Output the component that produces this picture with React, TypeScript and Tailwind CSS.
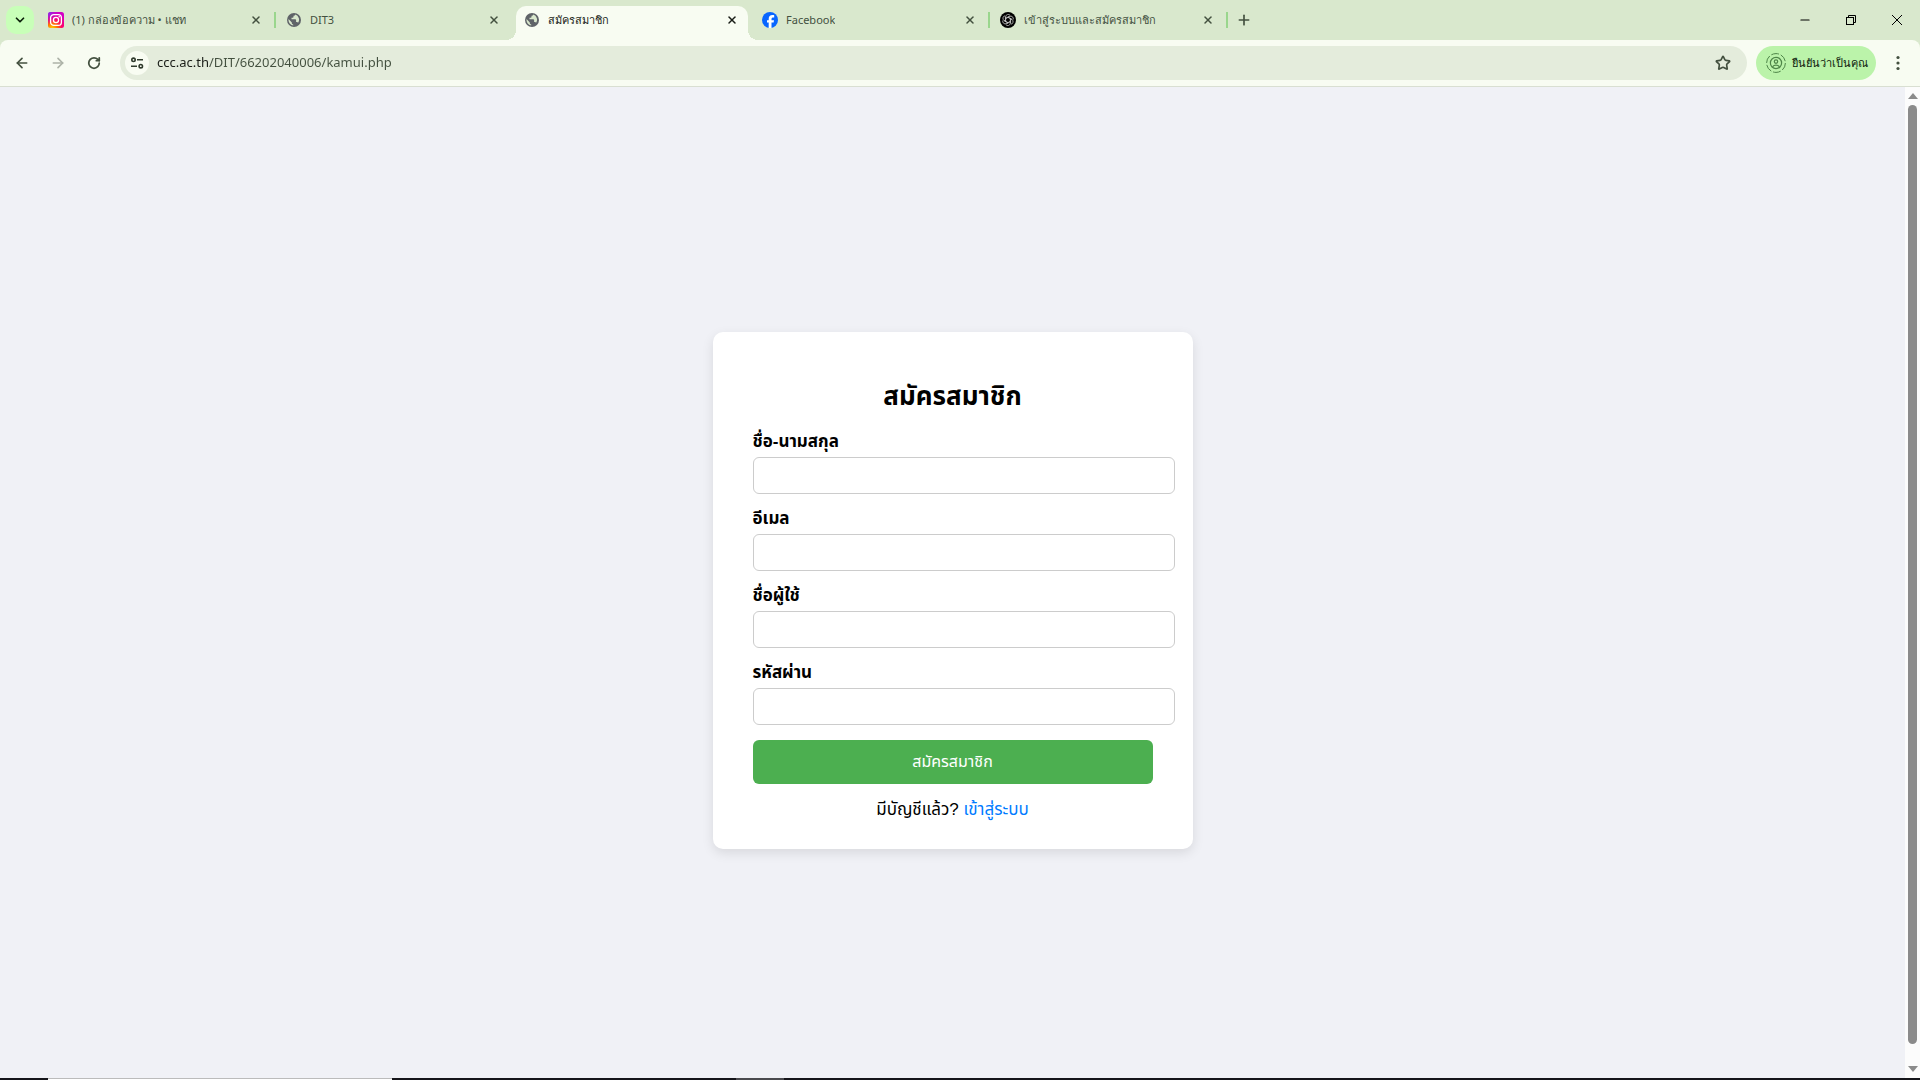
import type { ReactNode } from "react";
import {
  ArrowLeft,
  ArrowRight,
  ChevronDown,
  Minus,
  Plus,
  RotateCw,
  Star,
  X,
} from "lucide-react";
import clsx from "clsx";

function InstagramIcon() {
  return (
    <svg viewBox="0 0 16 16" className="size-4 shrink-0" aria-hidden="true">
      <defs>
        <radialGradient id="ig-warm" cx="0.25" cy="1.05" r="1.05">
          <stop offset="0" stopColor="#ffd600" />
          <stop offset="0.3" stopColor="#ff7a00" />
          <stop offset="0.6" stopColor="#ff0169" />
          <stop offset="1" stopColor="#d300c5" />
        </radialGradient>
        <radialGradient id="ig-cool" cx="0" cy="0" r="0.8">
          <stop offset="0" stopColor="#7638fa" />
          <stop offset="1" stopColor="#d300c5" stopOpacity="0" />
        </radialGradient>
      </defs>
      <rect width="16" height="16" rx="2.5" fill="url(#ig-warm)" />
      <rect width="16" height="16" rx="2.5" fill="url(#ig-cool)" />
      <g fill="none" stroke="#fff" strokeWidth="1.3">
        <rect x="2.6" y="2.6" width="10.8" height="10.8" rx="3.2" />
        <circle cx="8" cy="8" r="2.6" />
      </g>
      <circle cx="11.2" cy="4.8" r="0.8" fill="#fff" />
    </svg>
  );
}

function GlobeIcon() {
  return (
    <svg viewBox="0 0 16 16" className="size-4 shrink-0" aria-hidden="true">
      <circle cx="8" cy="8" r="7" fill="#5f6368" />
      <path
        d="M9.3 2.4c-.2.8-.9 1.300-1.800 1.300v1.200c0 .5-.4.8-.9.8H5.500v1.500h3.700c.5 0 .9.4.9.9v1.800h.7c.6 0 1.100.4 1.300.9a5.600 5.600 0 0 0-2.800-8.400z"
        fill="#d9e8cd"
      />
      <path
        d="M2.500 7.100l3.300 3.300v.7c0 .8.600 1.400 1.400 1.400v1.100a5.700 5.700 0 0 1-4.700-6.500z"
        fill="#d9e8cd"
      />
    </svg>
  );
}

function FacebookIcon() {
  return (
    <svg viewBox="0 0 16 16" className="size-4 shrink-0" aria-hidden="true">
      <circle cx="8" cy="8" r="8" fill="#0866ff" />
      <path
        d="M6.700 15.900v-5.300H5V8.200h1.700V7.100c0-2.700 1.200-4 3.900-4 .5 0 1.200.1 1.600.2v2.200h-.9c-1.300 0-1.800.5-1.800 1.800v.9h2.500l-.4 2.400H9.500v5.300z"
        fill="#fff"
      />
    </svg>
  );
}

function ChatIcon() {
  return (
    <svg viewBox="0 0 16 16" className="size-4 shrink-0" aria-hidden="true">
      <circle cx="8" cy="8" r="8" fill="#000" />
      <g fill="none" stroke="#cfcfcf" strokeWidth="0.7">
        {[0, 60, 120, 180, 240, 300].map((angle) => (
          <path
            key={angle}
            d="M5.700 9.400V4.900a2.500 2.500 0 0 1 4.500-1.500M5.700 6.300l3.900-2.200"
            transform={`rotate(${angle} 8 8)`}
          />
        ))}
      </g>
    </svg>
  );
}

function TuneIcon() {
  return (
    <svg viewBox="0 0 16 16" className="size-4" fill="none" stroke="#2f3a2c" strokeWidth="1.6" aria-hidden="true">
      <circle cx="4.500" cy="4.800" r="1.700" />
      <path d="M8 4.800h6M2 11.200h6" />
      <circle cx="11.800" cy="11.200" r="1.700" />
    </svg>
  );
}

function ProfileIcon() {
  return (
    <svg viewBox="0 0 20 20" className="size-5 shrink-0" fill="none" stroke="#4e8548" aria-hidden="true">
      <circle cx="10" cy="10" r="9.400" strokeWidth="1" strokeDasharray="7.800 2" />
      <circle cx="10" cy="10" r="5.600" strokeWidth="1.200" />
      <circle cx="10" cy="8.600" r="1.700" strokeWidth="1.200" />
      <path d="M6.500 13.800c1.700-2.200 5.300-2.200 7 0" strokeWidth="1.200" />
    </svg>
  );
}

interface TabInfo {
  title: string;
  icon: ReactNode;
  active?: boolean;
  separator?: boolean;
}

const TABS: TabInfo[] = [
  { title: "(1) กล่องข้อความ • แชท", icon: <InstagramIcon />, separator: true },
  { title: "DIT3", icon: <GlobeIcon /> },
  { title: "สมัครสมาชิก", icon: <GlobeIcon />, active: true },
  { title: "Facebook", icon: <FacebookIcon />, separator: true },
  { title: "เข้าสู่ระบบและสมัครสมาชิก", icon: <ChatIcon />, separator: true },
];

const FIELDS = [
  { id: "fullname", label: "ชื่อ-นามสกุล", type: "text" },
  { id: "email", label: "อีเมล", type: "email" },
  { id: "username", label: "ชื่อผู้ใช้", type: "text" },
  { id: "password", label: "รหัสผ่าน", type: "password" },
];

function Tab({ title, icon, active, separator }: TabInfo) {
  return (
    <div className="relative flex w-[238px] min-w-0 items-end">
      {active && (
        <>
          {/* Curved feet where the active tab meets the toolbar */}
          <span className="absolute bottom-0 -left-2 size-2.5 bg-[radial-gradient(circle_at_top_left,transparent_10px,#f8fcf2_10px)]" />
          <span className="absolute bottom-0 -right-1.5 size-2.5 bg-[radial-gradient(circle_at_top_right,transparent_10px,#f8fcf2_10px)]" />
        </>
      )}
      <div
        className={clsx(
          "ml-0.5 mr-1 flex h-[34px] min-w-0 flex-1 items-center rounded-t-[10px] pb-1.5 pl-2 pr-1.5",
          active ? "bg-[#f8fcf2] text-[#191d17]" : "text-[#43503f]"
        )}
      >
        <button className="flex min-w-0 flex-1 items-center gap-2 text-left text-[11px]">
          {icon}
          <span className="truncate leading-5">{title}</span>
        </button>
        <button className="flex size-5 items-center justify-center" aria-label="Close tab">
          <X className="size-3" strokeWidth={3} />
        </button>
      </div>
      {separator && <span className="absolute top-3 right-0 h-4 w-0.5 bg-[#9ad68d]" />}
    </div>
  );
}

function TabStrip() {
  return (
    <div className="flex h-10 shrink-0 bg-[#d9e8cd]">
      <button
        className="ml-1.5 mr-1 mt-1.5 flex size-7 items-center justify-center rounded-[10px] bg-[#c8ffb8] text-[#0c200a]"
        aria-label="Search tabs"
      >
        <ChevronDown className="size-3.5" strokeWidth={3} />
      </button>
      <div className="flex min-w-0">
        {TABS.map((tab) => (
          <Tab key={tab.title} {...tab} />
        ))}
      </div>
      <button className="ml-1.5 flex w-5 items-center justify-center text-[#43503f]" aria-label="New tab">
        <Plus className="size-4" strokeWidth={2.5} />
      </button>
      <div className="ml-auto flex text-black">
        <button className="flex w-[46px] items-center justify-center" aria-label="Minimize">
          <Minus className="size-3.5" strokeWidth={2} />
        </button>
        <button className="flex w-[46px] items-center justify-center" aria-label="Restore">
          <svg viewBox="0 0 10 10" className="size-2.5" fill="none" stroke="currentColor">
            <rect x="0.500" y="2.500" width="7" height="7" />
            <path d="M2.500 2.500v-2h7v7h-2" />
          </svg>
        </button>
        <button className="flex w-[46px] items-center justify-center" aria-label="Close">
          <svg viewBox="0 0 10 10" className="size-2.5" fill="none" stroke="currentColor">
            <path d="M0 0l10 10M10 0L0 10" />
          </svg>
        </button>
      </div>
    </div>
  );
}

function Toolbar() {
  return (
    <div className="shrink-0 bg-[#d9e8cd]">
      <div className="flex items-center rounded-t-lg border-b border-[#d9dfd2] bg-[#f8fcf2] py-1.5 pl-1 pr-2 text-[#43503f]">
        <button className="flex h-8 w-9 items-center justify-center" aria-label="Back">
          <ArrowLeft className="size-4" strokeWidth={2.5} />
        </button>
        <button className="flex h-8 w-9 items-center justify-center text-[#adb3a8]" aria-label="Forward" disabled>
          <ArrowRight className="size-4" strokeWidth={2.5} />
        </button>
        <button className="flex h-8 w-9 items-center justify-center" aria-label="Reload">
          <RotateCw className="size-3.5" strokeWidth={3} />
        </button>
        <div className="ml-2 flex h-[34px] flex-1 items-center rounded-full bg-[#e4ecdc] pl-[5px] pr-3">
          <button
            className="mr-2 flex size-6 items-center justify-center rounded-full bg-[#f8fcf2]"
            aria-label="Site information"
          >
            <TuneIcon />
          </button>
          <input
            type="text"
            aria-label="Address"
            defaultValue="ccc.ac.th/DIT/66202040006/kamui.php"
            className="flex-1 bg-[linear-gradient(to_right,#191d17_51px,#43503f_51px)] bg-clip-text text-[13px] text-transparent outline-none"
          />
          <button className="flex size-6 items-center justify-center" aria-label="Bookmark">
            <Star className="size-4" strokeWidth={2.5} />
          </button>
        </div>
        <button className="ml-[9px] flex h-[34px] items-center gap-1.5 rounded-full bg-[#bbf3aa] pl-2.5 pr-2 text-[11px] text-[#0c200a]">
          <ProfileIcon />
          ยืนยันว่าเป็นคุณ
        </button>
        <button className="ml-2 flex size-7 items-center justify-center" aria-label="Menu">
          <svg viewBox="0 0 4 16" className="h-4 w-1" fill="currentColor">
            <circle cx="2" cy="2.500" r="1.600" />
            <circle cx="2" cy="8" r="1.600" />
            <circle cx="2" cy="13.500" r="1.600" />
          </svg>
        </button>
      </div>
    </div>
  );
}

function RegisterForm() {
  return (
    <form
      className="w-[480px] rounded-[10px] bg-white px-10 pt-10 pb-[27px] shadow-[0_4px_12px_rgba(0,0,0,0.1)]"
      onSubmit={(e) => e.preventDefault()}
    >
      <h2 className="mt-2 mb-5 text-center text-[26px] leading-8 font-bold">สมัครสมาชิก</h2>
      {FIELDS.map((field) => (
        <div key={field.id} className="mb-[15px]">
          <label htmlFor={field.id} className="mb-[5px] block text-[17px] leading-5 font-bold">
            {field.label}
          </label>
          {/* Inputs run past the right edge of the column */}
          <input
            id={field.id}
            type={field.type}
            className="block h-[37px] w-[422px] rounded-md border border-[#ccc] bg-white px-2.5 text-sm"
          />
        </div>
      ))}
      <button
        type="submit"
        className="h-11 w-full rounded-md bg-[#4caf50] text-base text-white"
      >
        สมัครสมาชิก
      </button>
      <p className="mt-3.5 text-center text-[17px] leading-6">
        มีบัญชีแล้ว?{" "}
        <a href="#login" className="text-[#007bff]">
          เข้าสู่ระบบ
        </a>
      </p>
    </form>
  );
}

function Scrollbar() {
  return (
    <div className="flex w-[15px] shrink-0 flex-col items-center bg-[#fcfcfc] text-[#8b8b8b]">
      <svg viewBox="0 0 10 6" className="mt-1.5 h-1.5 w-2.5" fill="currentColor">
        <path d="M5 0l5 6H0z" />
      </svg>
      <div className="mt-1.5 mb-[22px] w-[9px] flex-1 rounded-full bg-[#8b8b8b]" />
      <svg viewBox="0 0 10 6" className="mb-1.5 h-1.5 w-2.5" fill="currentColor">
        <path d="M5 6L0 0h10z" />
      </svg>
    </div>
  );
}

export default function App() {
  return (
    <div className="flex h-screen flex-col overflow-hidden font-['Noto_Sans','Open_Sans',sans-serif]">
      <TabStrip />
      <Toolbar />
      <div className="flex min-h-0 flex-1">
        <main className="flex flex-1 items-center justify-center bg-[#f0f1f6] pt-4 font-['Liberation_Sans','Noto_Sans_Thai',sans-serif] text-black">
          <RegisterForm />
        </main>
        <Scrollbar />
      </div>
      {/* Sliver of the taskbar */}
      <div className="flex h-0.5 shrink-0 bg-[#15151a]">
        <div className="ml-12 w-[344px] border-t border-[#bbb] bg-white" />
        <div className="ml-[344px] w-12 bg-[#4a4a4e]" />
      </div>
    </div>
  );
}
